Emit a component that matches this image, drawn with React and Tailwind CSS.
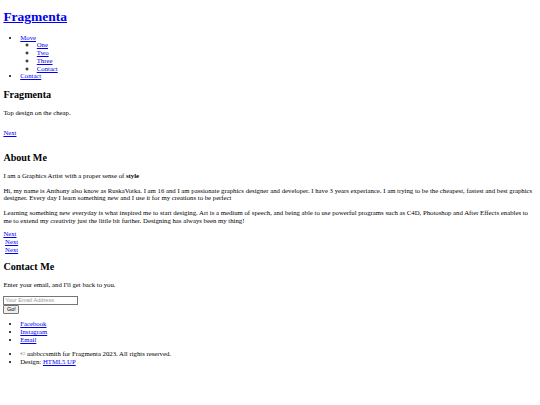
export default function App() {
  const link = 'text-[#0000ee] underline'
  return (
    <div className="min-h-screen bg-white px-[3.375px] pt-[9.04px] pb-[8px] font-['Liberation_Serif',_'Times_New_Roman',_serif] text-[6.75px] leading-[7.76px] text-black">
      {/* Header */}
      <header>
        <h1 className="mb-[9.04px] text-[13.5px] font-bold leading-[15.5px]">
          <a href="#" className={link}>Fragmenta</a>
        </h1>
        <nav>
          <ul className="list-disc pl-[16.875px]">
            <li>
              <a href="#" className={link}>Move</a>
              <ul className="[list-style-type:circle] pl-[16.5px]">
                <li><a href="#" className={link}>One</a></li>
                <li><a href="#" className={link}>Two</a></li>
                <li><a href="#" className={link}>Three</a></li>
                <li><a href="#" className={link}>Contact</a></li>
              </ul>
            </li>
            <li><a href="#" className={link}>Contact</a></li>
          </ul>
        </nav>
      </header>

      {/* Intro */}
      <section>
        <h2 className="mt-[8.4px] mb-[8.4px] text-[10.125px] font-bold leading-[11.64px]">Fragmenta</h2>
        <p>Top design on the cheap.</p>
        <div className="mt-[12.7px]">
          <a href="#" className={link}>Next</a>
        </div>
      </section>

      {/* About */}
      <section>
        <h2 className="mt-[15.3px] mb-[8.4px] text-[10.125px] font-bold leading-[11.64px]">About Me</h2>
        <p>I am a Graphics Artist with a proper sense of <strong className="font-bold">style</strong></p>
        <p className="mt-[6.75px]">
          Hi, my name is Anthony also know as RuskaVotka. I am 16 and I am passionate graphics designer and developer. I have 3 years experiance. I am trying to be the cheapest, fastest and best graphics designer. Every day I learn something new and I use it for my creations to be perfect
        </p>
        <p className="mt-[6.75px]">
          Learning something new everyday is what inspired me to start desiging. Art is a medium of speech, and being able to use powerful programs such as C4D, Photoshop and After Effects enables to me to extend my creativity just the little bit further. Designing has always been my thing!
        </p>
        <div className="mt-[5.8px]">
          <a href="#" className={link}>Next</a>
          <br />
          {'\u00a0'}<a href="#" className={link}>Next</a>
          <br />
          {'\u00a0'}<a href="#" className={link}>Next</a>
        </div>
      </section>

      {/* Contact */}
      <section>
        <h2 className="mt-[7.8px] mb-[8.4px] text-[10.125px] font-bold leading-[11.64px]">Contact Me</h2>
        <p>Enter your email, and I'll get back to you.</p>
        <form className="mt-[6.75px]" onSubmit={(e) => e.preventDefault()}>
          <input
            type="email"
            placeholder="Your Email Address"
            className="block h-[8.9px] w-[75px] border-[0.5px] border-[#767676] px-[0.9px] font-['Liberation_Sans',_Arial,_sans-serif] text-[5.625px] leading-[6.5px] placeholder:text-[#9a9a9a]"
          />
          <button
            type="submit"
            className="block h-[8.9px] rounded-[1px] border-[0.5px] border-[#767676] bg-[#efefef] px-[2.5px] font-['Liberation_Sans',_Arial,_sans-serif] text-[5.625px] leading-[6.5px]"
          >
            Go!
          </button>
        </form>
        <ul className="mt-[6.75px] list-disc pl-[16.875px]">
          <li><a href="#" className={link}>Facebook</a></li>
          <li><a href="#" className={link}>Instagram</a></li>
          <li><a href="#" className={link}>Email</a></li>
        </ul>
      </section>

      {/* Footer */}
      <footer>
        <ul className="mt-[6.75px] list-disc pl-[16.875px]">
          <li>© aabbccsmith for Fragmenta 2023. All rights reserved.</li>
          <li>Design: <a href="#" className={link}>HTML5 UP</a></li>
        </ul>
      </footer>
    </div>
  )
}
